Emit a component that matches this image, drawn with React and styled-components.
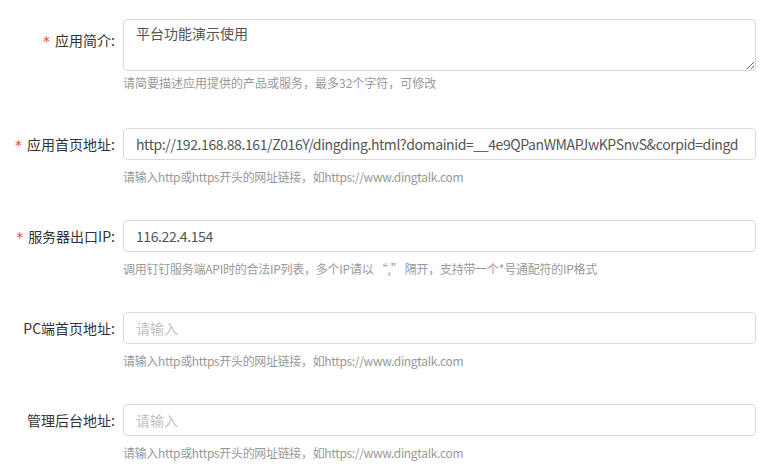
import React from "react";
import styled, { createGlobalStyle } from "styled-components";

const GlobalStyle = createGlobalStyle`
  html, body {
    margin: 0;
    padding: 0;
    background: #ffffff;
  }
  body {
    font-family: "Noto Sans CJK SC", "Liberation Sans", sans-serif;
    -webkit-font-smoothing: antialiased;
  }
  * { box-sizing: border-box; }
`;

const Form = styled.form`
  width: 771px;
  padding-top: 19px;
`;

const FormItem = styled.div`
  display: grid;
  grid-template-columns: 123px 633px;
  align-items: start;
  margin-bottom: ${(p) => p.$gap}px;
`;

const Label = styled.label`
  display: block;
  text-align: right;
  padding-right: 8px;
  padding-top: ${(p) => p.$offset || 0}px;
  font-size: 14px;
  line-height: 32px;
  color: #333333;
  white-space: nowrap;
`;

const Required = styled.span`
  display: inline-block;
  color: #f04134;
  font-family: "DejaVu Sans", sans-serif;
  font-size: 14px;
  margin-right: 5px;
`;

const Control = styled.div`
  display: flex;
  flex-direction: column;
`;

const fieldBase = `
  display: block;
  width: 100%;
  border: 1px solid #d9d9d9;
  border-radius: 4px;
  background: #ffffff;
  font-family: "Noto Sans CJK SC", "Liberation Sans", sans-serif;
  font-size: 14px;
  letter-spacing: -0.4px;
  color: #555555;
  outline: none;
  margin: 0;
  &::placeholder { color: #bfbfbf; letter-spacing: 0; }
`;

const Input = styled.input`
  ${fieldBase}
  height: 32px;
  padding: 0 12px;
  line-height: 30px;
`;

const TextArea = styled.textarea`
  ${fieldBase}
  height: 52px;
  padding: 4px 12px;
  line-height: 19px;
  letter-spacing: 0;
  resize: vertical;
`;

const Help = styled.div`
  margin-top: ${(p) => p.$top}px;
  font-size: 12px;
  line-height: 17px;
  letter-spacing: ${(p) => p.$spacing || 0}px;
  color: #999999;
  white-space: nowrap;
`;

const URL_HELP = "请输入http或https开头的网址链接，如https://www.dingtalk.com";

const Field = ({ label, required, gap, labelOffset, helpTop = 8, helpSpacing, help, children }) => (
  <FormItem $gap={gap}>
    <Label $offset={labelOffset}>
      {required && <Required>*</Required>}
      {label}:
    </Label>
    <Control>
      {children}
      <Help $top={helpTop} $spacing={helpSpacing}>{help}</Help>
    </Control>
  </FormItem>
);

export default function App() {
  return (
    <>
      <GlobalStyle />
      <Form onSubmit={(e) => e.preventDefault()}>
        <Field
          label="应用简介"
          required
          gap={37}
          labelOffset={5}
          helpTop={3}
          help="请简要描述应用提供的产品或服务，最多32个字符，可修改"
        >
          <TextArea defaultValue="平台功能演示使用" />
        </Field>
        <Field label="应用首页地址" required gap={35} helpSpacing={-0.33} help={URL_HELP}>
          <Input defaultValue="http://192.168.88.161/Z016Y/dingding.html?domainid=__4e9QPanWMAPJwKPSnvS&corpid=dingd" />
        </Field>
        <Field
          label="服务器出口IP"
          required
          gap={35}
          helpSpacing={-0.25}
          help="调用钉钉服务端API时的合法IP列表，多个IP请以 “,” 隔开，支持带一个*号通配符的IP格式"
        >
          <Input defaultValue="116.22.4.154" />
        </Field>
        <Field label="PC端首页地址" gap={35} helpSpacing={-0.33} help={URL_HELP}>
          <Input placeholder="请输入" />
        </Field>
        <Field label="管理后台地址" gap={0} helpSpacing={-0.33} help={URL_HELP}>
          <Input placeholder="请输入" />
        </Field>
      </Form>
    </>
  );
}
